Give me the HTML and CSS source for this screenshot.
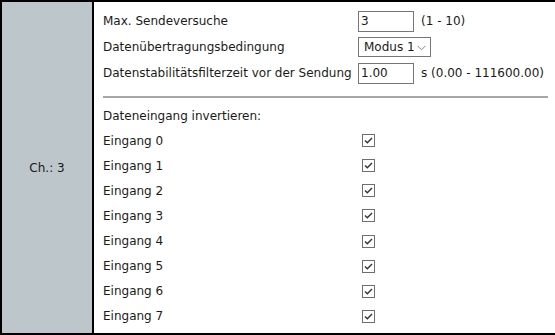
FILE: index.html
```html
<!DOCTYPE html>
<html>
<head>
<meta charset="utf-8">
<link rel="stylesheet" href="styles.css">
</head>
<body>
<div class="panel">
  <div class="side">Ch.: 3</div>
  <div class="main">
    <div class="form">
      <div class="lbl">Max. Sendeversuche</div>
      <div class="ctl"><span class="inp">3</span><span class="hint">(1 - 10)</span></div>
      <div class="lbl">Datenübertragungsbedingung</div>
      <div class="ctl"><span class="sel">Modus 1<svg class="chev" width="9" height="6" viewBox="0 0 9 6"><path d="M0.5 0.8 L4.5 4.8 L8.5 0.8" fill="none" stroke="#8a8a8a" stroke-width="1"/></svg></span></div>
      <div class="lbl">Datenstabilitätsfilterzeit vor der Sendung</div>
      <div class="ctl"><span class="inp">1.00</span><span class="hint">s (0.00 - 111600.00)</span></div>
    </div>
    <hr class="sep">
    <div class="head">Dateneingang invertieren:</div>
    <div class="checks">
      <div class="lbl">Eingang 0</div><div class="ctl"><span class="cb"><svg width="11" height="11" viewBox="0 0 11 11"><path d="M2 5.5 L4.3 7.8 L9 3" fill="none" stroke="#333" stroke-width="1.4"/></svg></span></div>
      <div class="lbl">Eingang 1</div><div class="ctl"><span class="cb"><svg width="11" height="11" viewBox="0 0 11 11"><path d="M2 5.5 L4.3 7.8 L9 3" fill="none" stroke="#333" stroke-width="1.4"/></svg></span></div>
      <div class="lbl">Eingang 2</div><div class="ctl"><span class="cb"><svg width="11" height="11" viewBox="0 0 11 11"><path d="M2 5.5 L4.3 7.8 L9 3" fill="none" stroke="#333" stroke-width="1.4"/></svg></span></div>
      <div class="lbl">Eingang 3</div><div class="ctl"><span class="cb"><svg width="11" height="11" viewBox="0 0 11 11"><path d="M2 5.5 L4.3 7.8 L9 3" fill="none" stroke="#333" stroke-width="1.4"/></svg></span></div>
      <div class="lbl">Eingang 4</div><div class="ctl"><span class="cb"><svg width="11" height="11" viewBox="0 0 11 11"><path d="M2 5.5 L4.3 7.8 L9 3" fill="none" stroke="#333" stroke-width="1.4"/></svg></span></div>
      <div class="lbl">Eingang 5</div><div class="ctl"><span class="cb"><svg width="11" height="11" viewBox="0 0 11 11"><path d="M2 5.5 L4.3 7.8 L9 3" fill="none" stroke="#333" stroke-width="1.4"/></svg></span></div>
      <div class="lbl">Eingang 6</div><div class="ctl"><span class="cb"><svg width="11" height="11" viewBox="0 0 11 11"><path d="M2 5.5 L4.3 7.8 L9 3" fill="none" stroke="#333" stroke-width="1.4"/></svg></span></div>
      <div class="lbl">Eingang 7</div><div class="ctl"><span class="cb"><svg width="11" height="11" viewBox="0 0 11 11"><path d="M2 5.5 L4.3 7.8 L9 3" fill="none" stroke="#333" stroke-width="1.4"/></svg></span></div>
    </div>
  </div>
</div>
</body>
</html>
```

FILE: styles.css
```css
html, body {
  margin: 0;
  padding: 0;
  background: #fff;
}
body {
  font-family: "DejaVu Sans", Verdana, sans-serif;
  font-size: 12px;
  color: #1a1a1a;
}
.panel {
  display: flex;
  height: 335px;
  box-sizing: border-box;
  border-top: 2px solid #000;
  border-bottom: 2px solid #000;
  border-left: 2px solid #000;
}
.side {
  width: 90px;
  flex: none;
  background: #bdc6ca;
  border-right: 2px solid #000;
  display: flex;
  align-items: center;
  justify-content: center;
}
.main {
  flex: 1;
  padding: 6px 7px 0 9px;
}
.form {
  display: grid;
  grid-template-columns: 255px auto;
  grid-auto-rows: 26px;
}
.lbl {
  display: flex;
  align-items: center;
  white-space: nowrap;
}
.ctl {
  display: flex;
  align-items: center;
}
.inp {
  box-sizing: border-box;
  width: 56px;
  height: 21px;
  border: 1px solid #767676;
  padding: 0 2px;
  display: flex;
  align-items: center;
}
.hint {
  margin-left: 7px;
}
.sel {
  box-sizing: border-box;
  height: 20px;
  width: 73px;
  border: 1px solid #767676;
  padding: 0 4px 0 5px;
  display: flex;
  align-items: center;
  justify-content: space-between;
}
.chev {
  margin-top: 1px;
}
.sep {
  border: none;
  border-top: 2px solid #a6a6a6;
  margin: 10px 0 0 0;
  height: 0;
}
.head {
  height: 24px;
  margin-top: 6px;
  display: flex;
  align-items: center;
}
.checks {
  display: grid;
  grid-template-columns: 259px auto;
  grid-auto-rows: 25.14px;
}
.cb {
  box-sizing: border-box;
  width: 13px;
  height: 13px;
  border: 1px solid #6e6e6e;
  display: flex;
  align-items: center;
  justify-content: center;
}
```
